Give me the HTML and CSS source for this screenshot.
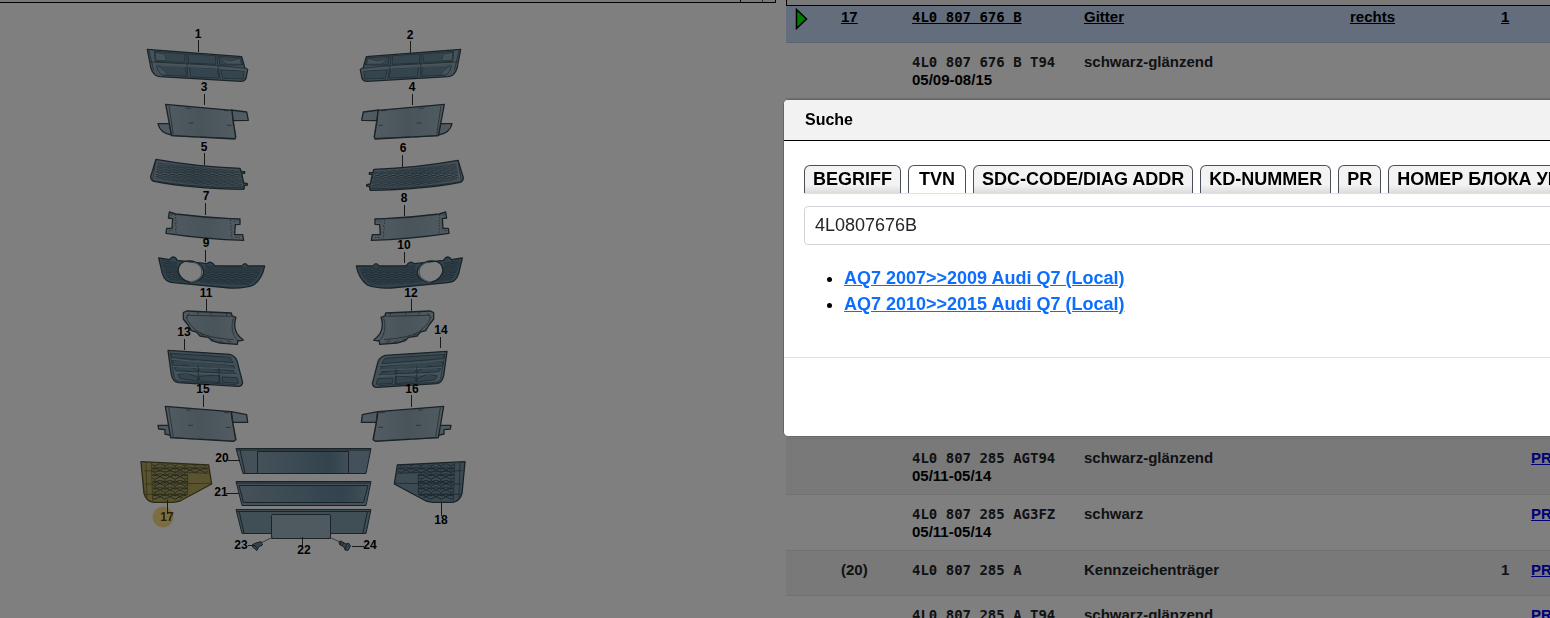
FILE: index.html
```html
<!DOCTYPE html>
<html lang="de">
<head>
<meta charset="utf-8">
<title>Suche</title>
<link rel="stylesheet" href="styles.css">
</head>
<body>
<main class="catalog">
  <section class="drawing">
    <div class="toolbar"><span class="tool"></span><span class="tool tool-last"></span></div>
    <svg class="parts" viewBox="0 3 776 615" role="img">
      <defs>
        <linearGradient id="shade"><stop offset="0" stop-color="#92aab9"/><stop offset=".45" stop-color="#7693a4"/><stop offset="1" stop-color="#8ba4b4"/></linearGradient>
        <linearGradient id="plain"><stop offset="0" stop-color="#a2b6c3"/><stop offset=".5" stop-color="#92a7b5"/><stop offset="1" stop-color="#a6b9c4"/></linearGradient>
        <linearGradient id="panel"><stop offset="0" stop-color="#8ba3b3"/><stop offset=".8" stop-color="#66889d"/><stop offset="1" stop-color="#819eb0"/></linearGradient>
        <pattern id="mesh" width="24" height="14" patternUnits="userSpaceOnUse">
          <path d="M0 3l5-2h7l5 4h7M0 12l5-4h7l5 3h7" fill="none" stroke="#2c3f4a" stroke-width="2.500"/>
        </pattern>
        <pattern id="weave" width="30" height="20" patternUnits="userSpaceOnUse">
          <path d="M0 10L15 2 30 10 15 18zM0 0L15 8 30 0" fill="none" stroke="#22323c" stroke-width="2.500"/>
        </pattern>
        <g id="vent" class="ink">
          <path fill="url(#shade)" d="M52 88L335 110 345 145 353 148 348 175Q345 184 333 184L90 170Q70 168 63 145z"/>
          <path class="dark" d="M73 94L165 101 164 127 76 125zM174 102L256 107 258 133 176 129zM266 109L334 114 338 135 270 135zM80 134L166 139 169 169 98 165Q84 159 80 134zM178 140L262 146 267 174 182 171zM272 149L342 153 340 177 277 175z"/>
          <path class="light" d="M76 97L105 103 109 122 77 121zM80 137Q100 142 112 165L98 165Q84 159 80 137zM264 112L300 123 330 115 334 133 290 132z"/>
          <path class="rim" d="M62 129L240 138 350 148M62 134L240 143 350 151"/>
          <path class="line" d="M170 100L173 170M260 106L270 176M58 93L70 150M62 126L240 135 350 145"/>
        </g>
        <g id="plate" class="ink">
          <path fill="url(#plain)" d="M84 311L118 311 125 345Q90 340 84 311zM304 270L350 276 355 301 308 302z"/>
          <path fill="url(#plain)" d="M107 253L306 271 309 303 317 351 315 357 125 347z"/>
          <path class="line" d="M117 258L130 344M165 259l5 6h12M280 268l4 4h14M176 309h14M291 316h14M125 347l72 4M210 351l104 4M306 274L318 351"/>
        </g>
        <g id="grille" class="ink">
          <path fill="url(#shade)" d="M78 418Q200 440 330 445L334 455H344V460H335L341 489 352 491V495L343 497 341 508Q180 505 72 484 62 480 62 470z"/>
          <path fill="url(#mesh)" stroke="none" d="M83 427Q200 444 328 451L338 500Q190 498 76 476z"/>
          <path class="line" d="M330 446L344 507M78 419L68 480M72 482Q190 503 341 503"/>
        </g>
        <g id="bracket" class="ink">
          <path fill="url(#plain)" d="M118 66L137 72Q220 82 302 86L330 87V103L316 104 314 134 338 134 341 151Q230 148 108 130L110 115H126L128 86 115 84z"/>
          <path class="line" stroke-dasharray="6 4" d="M134 73L139 79 134 87 140 95 135 104 140 112 136 120 139 130M303 88L300 98 305 106 301 115 306 125 303 135 307 146M121 75h10M116 122h12M311 94h12M316 142h14"/>
        </g>
        <g id="fog" class="ink">
          <path class="body-dark" fill-rule="evenodd" d="M86 204L119 209Q126 196 137 204L142 211 230 221Q244 210 254 227L336 228Q345 214 354 228L404 228Q397 267 371 285 345 296 300 294L130 278Q104 276 97 250zM182 213C132 208 131 267 182 277C237 272 231 219 182 213z"/>
          <path fill="url(#mesh)" stroke="none" d="M94 211L141 216Q136 250 172 276L120 270Q104 260 94 211zM227 225L395 234Q385 270 354 285L225 280Q205 277 205 270 228 255 227 225z"/>
          <path class="rim" d="M190 217C226 225 225 268 182 277"/>
        </g>
        <g id="scoop" class="ink">
          <path fill="url(#plain)" d="M160 368L170 363 304 369 306 378 318 382Q304 425 340 450L323 453 322 463 270 459 245 452 235 442 210 438 200 426 184 422 174 405 160 387z"/>
          <path class="line" d="M171 376L304 379M168 380Q178 408 206 426T310 449M180 370Q170 373 170 386M204 366v8M244 366v8M290 370v8M310 384Q298 425 322 451M210 430l12 6M240 446l14 5M268 452l12 6M290 452l14 5"/>
        </g>
        <g id="intake" class="ink">
          <path fill="url(#shade)" d="M114 31L299 43Q315 47 321 62L338 128Q336 140 322 139L145 128Q129 126 124 104z"/>
          <path class="dark" d="M122 40L300 52 309 68 126 53zM126 62L170 60 312 77 312 91 130 76zM133 83L167 75 200 88 203 96 138 92zM205 83Q220 78 263 89L265 98 210 96zM269 87L308 94 320 103 271 100zM144 104L170 99 202 111 204 123 150 116zM207 109L268 105 271 128 210 123zM276 111L322 113 326 130 278 127z"/>
          <path class="rim" d="M125 58L310 73M130 79Q220 84 316 88M136 97L323 105"/>
          <path class="line" d="M120 36L132 110Q136 124 150 124L320 134M205 76V124M267 83V130"/>
        </g>
        <g id="plate-step" class="ink">
          <path fill="url(#plain)" d="M84 256H118L125 287 105 282V269L86 267zM304 215L350 224 353 247 308 247z"/>
          <path fill="url(#plain)" d="M106 199L303 215 308 247 318 299 310 304 122 293z"/>
          <path class="line" d="M116 203L130 291M168 205l4 5h10M280 214l4 4h14M175 256h14M288 262h14M122 293l72 4M208 297l102 6M304 220L316 298"/>
        </g>
        <g id="side">
          <path d="M33 365L236 375 245 432 150 483 130 487H70Q48 484 42 460z"/>
          <path class="weave" d="M66 370L232 378 236 400H173V464L148 480H70z"/>
          <path class="line" d="M48 367L51 475M64 368L68 484M42 392L238 400M44 432L245 430M44 463H170M173 402V464"/>
        </g>
      </defs>
      <use href="#vent" transform="translate(130 20) scale(.3333)"/>
      <use href="#vent" transform="translate(478 20) scale(-.3333 .3333)"/>
      <use href="#plate" transform="translate(130 20) scale(.3333)"/>
      <use href="#plate" transform="translate(480 20) scale(-.3333 .3333)"/>
      <use href="#grille" transform="translate(130 20) scale(.3333)"/>
      <use href="#grille" transform="translate(484 21) scale(-.3333 .3333)"/>
      <use href="#bracket" transform="translate(130 190) scale(.3333)"/>
      <use href="#bracket" transform="translate(485 190) scale(-.3333 .3333)"/>
      <use href="#fog" transform="translate(130 190) scale(.3333)"/>
      <use href="#fog" transform="translate(491 190) scale(-.3333 .3333)"/>
      <use href="#scoop" transform="translate(130 190) scale(.3333)"/>
      <use href="#scoop" transform="translate(487 190) scale(-.3333 .3333)"/>
      <use href="#intake" transform="translate(130 340) scale(.3333)"/>
      <use href="#intake" transform="translate(485 341) scale(-.3333 .3333)"/>
      <use href="#plate-step" transform="translate(130 340) scale(.3333)"/>
      <use href="#plate-step" transform="translate(479 340) scale(-.3333 .3333)"/>
      <circle cx="163" cy="517" r="10.500" fill="#f7dd86"/>
      <use href="#side" class="ink picked" transform="translate(130 340) scale(.3333)"/>
      <use href="#side" class="ink normal" transform="translate(476 340) scale(-.3333 .3333)"/>

      <g class="carrier">
        <path fill="#8aa3b4" d="M236 448.500H371L366 473.500H243z"/>
        <path fill="url(#panel)" d="M257.500 451.500H348.500V473.500H257.500z"/>
        <path d="M237 450H370M240 450L245 473"/>
        <path fill="#8aa3b4" d="M236 481.500H371L366 505.500H242z"/>
        <path fill="url(#panel)" d="M239 485.500H368L363.500 502.500H243.500z"/>
        <path d="M236 483H370"/>
        <path fill="#819cad" d="M236 509.500H371L366 533.500H242z"/>
        <path d="M236 511.500H370M239 511L244 533M367.500 511L363 533"/>
        <path fill="#9fb4c1" d="M272.500 514.500H329Q330.500 514.500 330.500 516V538.500H271.500V516z"/>
        <path class="hair" d="M261 543L273 537M329 537L340 542"/>
        <path class="screw" d="M252.500 544.500L256 543 261 541.500 262.500 545 258.500 547 257 550.500 252.500 547z"/>
        <path class="screw" d="M339 541.500L341 541 346 544 348.500 543 350.500 546 348 550.500 345 550 344 547 339.500 544.500z"/>
        <path d="M254 545l4 4M341 542l-1 3M343 543l-1 3M347 544l-2 5"/>
      </g>

      <path class="leader" d="M198.500 40V52M410.500 41V53M204.500 94V105M412.500 94V105M204.500 153V165M402.500 155V167M205.500 203V215M404.500 205V216M205.500 250V262M404.500 252V263M206.500 299V311M411.500 299V311M184.500 339V350M440.500 337V348M203.500 395V407M411.500 395V407M167.500 500V514M441.500 502V516M228 460.500H240M226 493.500H239M302.500 537V546M248 545.500H255M352 546.500H364"/>
      <g class="labels">
        <text x="198" y="38">1</text><text x="410" y="39">2</text>
        <text x="204" y="91">3</text><text x="412" y="91">4</text>
        <text x="204" y="151">5</text><text x="403" y="152">6</text>
        <text x="206" y="200">7</text><text x="404" y="202">8</text>
        <text x="206" y="247">9</text><text x="404" y="249">10</text>
        <text x="206" y="297">11</text><text x="411" y="297">12</text>
        <text x="184" y="336">13</text><text x="441" y="334">14</text>
        <text x="203" y="393">15</text><text x="412" y="393">16</text>
        <text x="167" y="521" class="label-picked">17</text><text x="441" y="524">18</text>
        <text x="222" y="462">20</text><text x="221" y="496">21</text>
        <text x="304" y="554">22</text><text x="241" y="549">23</text>
        <text x="370" y="549">24</text>
      </g>
    </svg>
  </section>

  <section class="list">
    <div class="list-head"></div>
    <div class="list-body">
      <table class="items">
        <colgroup>
          <col class="c-mark"><col class="c-pos"><col class="c-part"><col class="c-name"><col class="c-note"><col class="c-qty"><col>
        </colgroup>
        <tbody>
          <tr class="current">
            <td><svg class="marker" viewBox="0 0 14 22"><path d="M2.500 1.500L12.500 11L2.500 20.500z" fill="#00fa00" stroke="#000" stroke-width="1.500"/></svg></td>
            <td>17</td><td class="code">4L0 807 676 B</td><td>Gitter</td><td>rechts</td><td>1</td><td></td>
          </tr>
          <tr>
            <td></td><td></td><td><span class="code">4L0 807 676 B T94</span><br><span class="dates">05/09-08/15</span></td><td>schwarz-glänzend</td><td></td><td></td><td></td>
          </tr>
          <tr class="covered"><td colspan="7"></td></tr>
          <tr class="striped">
            <td></td><td></td><td><span class="code">4L0 807 285 AGT94</span><br><span class="dates">05/11-05/14</span></td><td>schwarz-glänzend</td><td></td><td></td><td><a href="#pr">PR</a></td>
          </tr>
          <tr>
            <td></td><td></td><td><span class="code">4L0 807 285 AG3FZ</span><br><span class="dates">05/11-05/14</span></td><td>schwarz</td><td></td><td></td><td><a href="#pr">PR</a></td>
          </tr>
          <tr class="striped">
            <td></td><td>(20)</td><td class="code">4L0 807 285 A</td><td>Kennzeichenträger</td><td></td><td>1</td><td><a href="#pr">PR</a></td>
          </tr>
          <tr>
            <td></td><td></td><td class="code">4L0 807 285 A T94</td><td>schwarz-glänzend</td><td></td><td></td><td><a href="#pr">PR</a></td>
          </tr>
        </tbody>
      </table>
    </div>
  </section>
</main>

<div class="backdrop"></div>

<div class="modal" role="dialog" aria-labelledby="modal-title">
  <header class="modal-head"><h1 class="modal-title" id="modal-title">Suche</h1></header>
  <div class="modal-body">
    <div class="tabs" role="tablist">
      <button class="tab" role="tab" type="button">BEGRIFF</button>
      <button class="tab active" role="tab" type="button" id="tab-tvn" aria-selected="true">TVN</button>
      <button class="tab" role="tab" type="button">SDC-CODE/DIAG ADDR</button>
      <button class="tab" role="tab" type="button">KD-NUMMER</button>
      <button class="tab" role="tab" type="button">PR</button>
      <button class="tab" role="tab" type="button">НОМЕР БЛОКА УПРАВЛЕНИЯ</button>
    </div>
    <input class="query" type="text" value="4L0807676B" aria-labelledby="tab-tvn">
    <ul class="results">
      <li><a href="#2007">AQ7 2007&gt;&gt;2009 Audi Q7 (Local)</a></li>
      <li><a href="#2010">AQ7 2010&gt;&gt;2015 Audi Q7 (Local)</a></li>
    </ul>
  </div>
  <footer class="modal-foot"></footer>
</div>
</body>
</html>
```

FILE: styles.css
```css
* { box-sizing: border-box; }

html, body { height: 100%; overflow: hidden; }

body {
  margin: 0;
  background: #fff;
  color: #212529;
  font-family: "Liberation Sans", Arial, sans-serif;
  font-size: 15px;
  line-height: 18px;
}

.catalog {
  display: grid;
  grid-template-columns: calc(50% + 1px) minmax(0, 1fr);
  gap: 10px;
  height: 100%;
  overflow: hidden;
}

/* Drawing */
.drawing { min-width: 0; }
.toolbar {
  display: flex;
  justify-content: flex-end;
  height: 3px;
  border: solid #000;
  border-width: 0 1px 1px 0;
  background: #f2f2f2;
}
.tool { width: 22px; border-left: 1px solid #000; }
.tool-last { width: 13px; border-color: #777; }
.parts { display: block; width: 100%; height: auto; }
.ink { stroke: #34464f; stroke-width: 4; stroke-linejoin: round; }
.dark { fill: #6a8a9c; stroke: #4a616f; stroke-width: 3; }
.body-dark { fill: #66879a; }
.light { fill: #8da5b4; stroke: #4a616f; stroke-width: 2; }
.rim { fill: none; stroke: #92abba; }
.line { fill: none; stroke-width: 2; }
.normal { fill: #7894a5; }
.picked { fill: #b3a85e; stroke: #5a5528; }
.weave { fill: url(#weave); stroke: none; }
.picked .weave { opacity: .4; }
.carrier { fill: none; stroke: #34464f; stroke-width: 1; }
.screw { fill: #6e8798; }
.hair { stroke: #777; }
.leader { fill: none; stroke: #333; stroke-width: 1; }
.labels { fill: #000; font-size: 12px; font-weight: 700; text-anchor: middle; }
.label-picked { fill: #54440c; }

/* Parts list */
.list { min-width: 0; }
.list-head {
  position: relative;
  height: 6px;
  border: solid #000;
  border-width: 0 0 1px 1px;
  background: #f2f2f2;
}
.list-body { margin-top: -8px; }
.items {
  width: 100%;
  border-collapse: separate;
  border-spacing: 0;
  table-layout: fixed;
  font-weight: 700;
}
.c-mark { width: 47px; }
.c-pos { width: 71px; }
.c-part { width: 172px; }
.c-name { width: 266px; }
.c-note { width: 151px; }
.c-qty { width: 30px; }
.items td {
  height: 45px;
  padding: 10px 0 9px 8px;
  border-bottom: 1px solid #dee2e6;
  vertical-align: top;
  white-space: nowrap;
}
.items a { color: #00e; }
.items .code { font-family: "DejaVu Sans Mono", monospace; font-size: 14px; }
.dates { color: #000; }
.striped { background: #f2f2f2; }
.current { background: #c6daf6; color: #000; text-decoration: underline; }
.current td { border-color: #b4c6e0; }
.covered td { height: 340px; }
.marker { display: block; width: 14px; height: 22px; }

/* Search dialog */
.backdrop { position: fixed; inset: 0; background: rgba(0, 0, 0, .5); }
.modal {
  position: fixed;
  top: 99px;
  left: calc(50% + 8px);
  right: -320px;
  border: 1px solid #646464;
  border-radius: 5px;
  background: #fff;
  overflow: hidden;
}
.modal-head {
  padding: 10px 21px;
  border-bottom: 1px solid #000;
  background: #f2f2f2;
}
.modal-title { margin: 0; color: #000; font-size: 16px; line-height: 20px; }
.modal-body { padding: 24px 20px 40px; }
.tabs {
  display: flex;
  gap: 7px;
  border-bottom: 1px solid #dee2e6;
}
.tab {
  flex: none;
  height: 28px;
  padding: 0 8px 2px;
  border: 1px solid #495057;
  border-bottom: 0;
  border-radius: 6px 6px 0 0;
  background: linear-gradient(#f3f3f3 70%, #dcdcdc);
  color: #000;
  font: 700 18px/24px "Liberation Sans", Arial, sans-serif;
  white-space: nowrap;
}
.tab.active { padding: 0 10px 2px; background: #fff; }
.query {
  display: block;
  width: 100%;
  height: 39px;
  margin-top: 12px;
  padding: 0 10px;
  border: 1px solid #ced4da;
  border-radius: 4px;
  color: #212529;
  font: 18px "Liberation Sans", Arial, sans-serif;
}
.results {
  margin: 20px 0 0;
  padding-left: 40px;
  color: #000;
  font-size: 18px;
  font-weight: 700;
  line-height: 26px;
}
.results a { color: #0d6efd; }
.modal-foot { height: 79px; border-top: 1px solid #dee2e6; }
```
